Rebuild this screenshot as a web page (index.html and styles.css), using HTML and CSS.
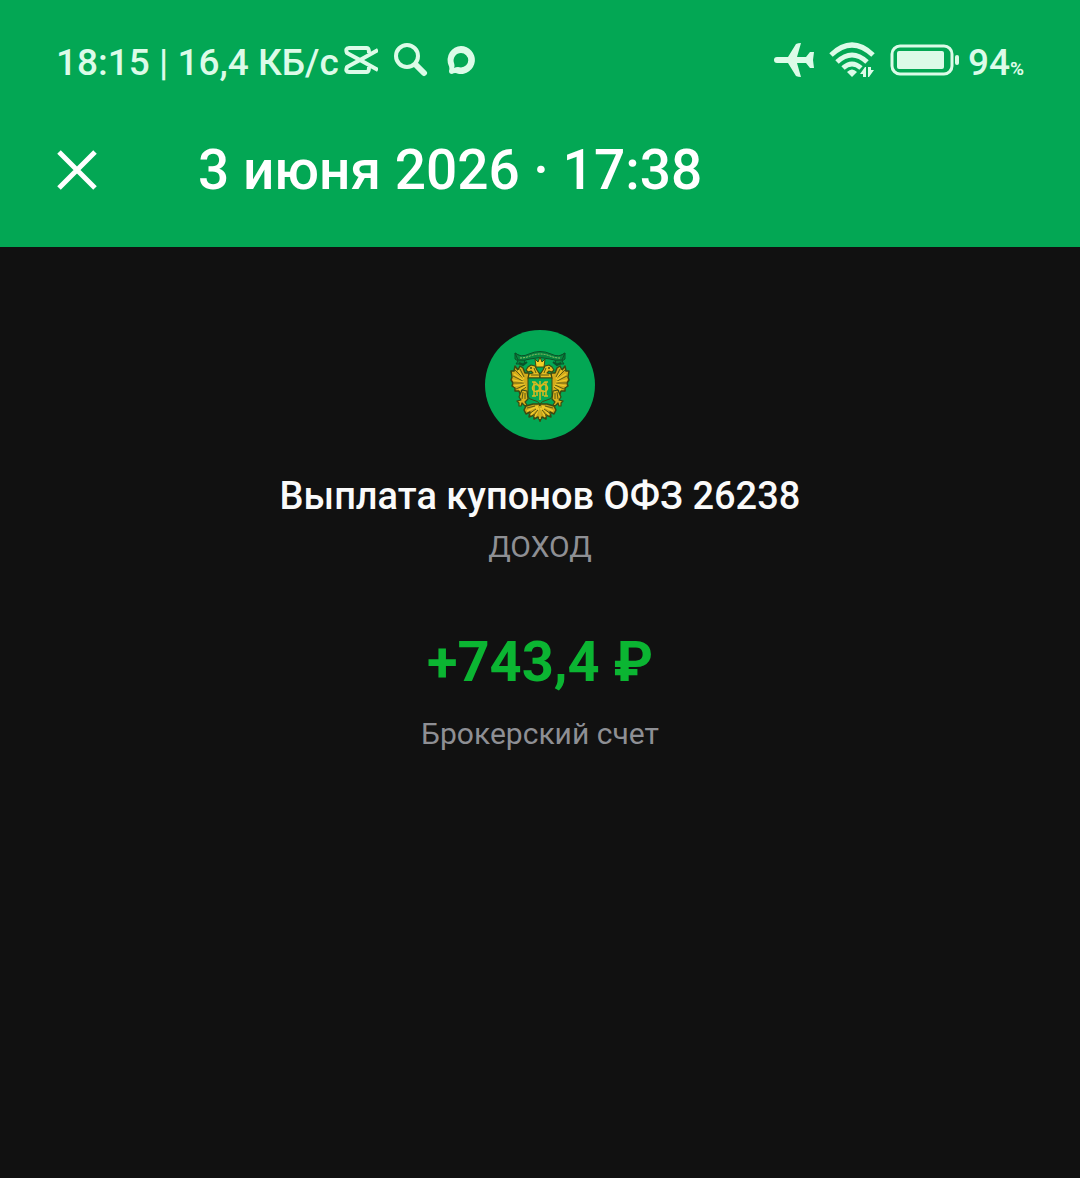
FILE: index.html
```html
<!DOCTYPE html>
<html lang="ru">
<head>
    <meta charset="UTF-8">
    <meta name="viewport" content="width=device-width, initial-scale=1.0">
    <title>Выплата купонов</title>
    <link rel="stylesheet" href="styles.css">
</head>
<body>
    <header class="header">
        <div class="status-bar">
            <div class="status-left">
                <span>18:15 | 16,4 КБ/с</span>
                <svg class="icon-cut" width="34" height="28" viewBox="0 0 34 28" fill="none" stroke="currentColor" stroke-width="4" stroke-linejoin="round">
                    <path d="M34 4L16 14L3 21Q1 26 5 26H23Q25 26 25 21"/>
                    <path d="M34 24L16 14L3 7Q1 2 5 2H23Q25 2 25 7"/>
                </svg>
                <svg class="icon-search" width="34" height="34" viewBox="0 0 34 34" fill="none" stroke="currentColor" stroke-linecap="round">
                    <circle cx="13" cy="13" r="11" stroke-width="4"/>
                    <path d="M22 22L30 30" stroke-width="6"/>
                </svg>
                <svg class="icon-chat" width="28" height="28" viewBox="0 0 28 28">
                    <path fill="currentColor" fill-rule="evenodd" d="M14 0A14 14 0 1 1 11 27.700Q8 26 5 28Q2 28 2 25Q3 22 1.500 19A14 14 0 0 1 14 0ZM14 7A7.500 7.500 0 0 0 7 17Q8 20 7 22Q10 20.500 14 21.500A7.200 7.200 0 0 0 14 7Z"/>
                </svg>
            </div>
            <div class="status-right">
                <svg class="icon-plane" width="42" height="36" viewBox="0 0 42 36" fill="currentColor">
                    <path d="M4 15H15L23 2Q25 1 28 1L24 15H33L37 10H41L40 18L41 26H37L33 21H24L28 35Q25 35 23 34L15 21H4Q1 21 1 18Q1 15 4 15Z"/>
                </svg>
                <svg class="icon-wifi" width="46" height="36" viewBox="0 0 46 36">
                    <g fill="none" stroke="currentColor" stroke-width="5">
                        <path d="M2 13Q23 -7 44 13"/>
                        <path d="M8 20Q23 6 38 20"/>
                        <path d="M14 26Q23 18 32 26"/>
                    </g>
                    <path fill="currentColor" d="M18 30Q23 25 28 30L23 35Z"/>
                    <path fill="#03a754" d="M30 29L36 22H46V36H30Z"/>
                    <path fill="currentColor" d="M37 25V35H34V32H31L36 25ZM39 35V25H42V28H45L40 35Z"/>
                </svg>
                <svg class="icon-battery" width="70" height="32" viewBox="0 0 70 32">
                    <rect x="2" y="2" width="60" height="28" rx="8" fill="none" stroke="currentColor" stroke-width="3"/>
                    <rect x="7" y="7" width="47" height="18" rx="2" fill="currentColor"/>
                    <rect x="65" y="11" width="4" height="10" rx="2" fill="currentColor"/>
                </svg>
                <span class="battery-level">94<span class="percent">%</span></span>
            </div>
        </div>
        <div class="title-bar">
            <button class="close-btn" type="button" aria-label="Закрыть">
                <svg width="42" height="42" viewBox="0 0 42 42" fill="none" stroke="currentColor" stroke-width="5">
                    <path d="M3 3L39 39M39 3L3 39"/>
                </svg>
            </button>
            <h1 class="title">3 июня 2026 · 17:38</h1>
        </div>
    </header>

    <main class="operation">
        <svg class="emblem" width="110" height="110" viewBox="0 0 110 110">
            <defs>
                <!-- left half of the eagle, mirrored for the right one -->
                <g id="half">
                    <!-- wing -->
                    <path d="M44 43L40 43L38 38L35 36L33 40L30 36L29 41L26 41L27 47L26 50L28 53L27 56L30 58L30 61L34 61L35 64L39 62L44 64Z" fill="#d3aa1b" stroke="#3b4a12" stroke-width="1.500" stroke-linejoin="round"/>
                    <path d="M30 40L38 48M28 46L38 51M29 53L39 53M31 59L40 55M36 61L41 57M35 39L39 47" fill="none" stroke="#5b5a12" stroke-width="1"/>
                    <path d="M33 40L39 49M29 44L38 50M28 50L39 52M29 56L40 54M34 60L41 56" fill="none" stroke="#f0cb2c" stroke-width="1.200"/>
                    <!-- leg and claws -->
                    <path d="M37 60L42 61L43 69L40 72L42 75L40 76L37 73L36 76L34 76V73L32 71L36 70L34 67Z" fill="#d9b11d" stroke="#3b4a12" stroke-width="1.200" stroke-linejoin="round"/>
                    <path d="M38 62L37 69M40 63L40 69" fill="none" stroke="#5b5a12" stroke-width="1"/>
                    <!-- tail -->
                    <path d="M55 74L48 74L41 76L39 80L41 84L45 82L44 87L49 85L49 89L53 87L55 91Z" fill="#c9a31c" stroke="#3b4a12" stroke-width="1.500" stroke-linejoin="round"/>
                    <path d="M53 76L42 81M53 77L46 85M54 78L50 87M55 76V89" fill="none" stroke="#f0cb2c" stroke-width="1.500"/>
                    <path d="M50 76L42 78M51 79L44 84M53 80L48 86" fill="none" stroke="#5b5a12" stroke-width="1"/>
                    <!-- head and neck -->
                    <path d="M55 48H43L44 44L48 43L46 41L43 42L41 40L43 37L46 35L50 36L52 40L54 43L55 44Z" fill="#e6bd20" stroke="#3b4a12" stroke-width="1.200" stroke-linejoin="round"/>
                    <circle cx="46" cy="38" r="1" fill="#3b4a12"/>
                    <path d="M49 38L51 43M46 45H54" fill="none" stroke="#5b5a12" stroke-width="1"/>
                    <!-- ribbon end -->
                    <path d="M37 27L30 23V29L33 31L31 34L39 34L40 30Z" fill="#06863d" stroke="#0a5229" stroke-width="1"/>
                    <path d="M34 33L38 35L42 32" stroke="#0a5229" stroke-width="2" fill="none"/>
                </g>
            </defs>
            <circle cx="55" cy="55" r="55" fill="#03a754"/>
            <use href="#half"/>
            <use href="#half" transform="matrix(-1 0 0 1 110 0)"/>
            <path d="M30 23Q36 28 44 24Q55 19 66 24Q74 28 80 23L77 30Q70 31 65 29Q55 26 45 29Q40 31 33 30Z" fill="#06863d" stroke="#0a5229" stroke-width="1"/>
            <path d="M35 28Q40 28 45 26Q55 22 65 26Q70 28 75 28" fill="none" stroke="#9fc56a" stroke-width="1" stroke-dasharray="2 1"/>
            <path d="M51 37L50 29L53 32L55 27L57 32L60 29L59 37Z" fill="#f2cf25" stroke="#3b4a12" stroke-width="1"/>
            <path d="M43 48H67V66Q67 69 62 70Q57 71 55 74Q53 71 48 70Q43 69 43 66Z" fill="#03a754" stroke="#3b4a12" stroke-width="1"/>
            <!-- monogram -->
            <g fill="none" stroke="#d8ba20" stroke-width="1.500">
                <path d="M49 52V66M61 52V66M55 51V70M47 66H51M59 66H63M47 52H50L55 57L60 52H63"/>
                <circle cx="51" cy="58" r="3.500"/>
                <circle cx="59" cy="58" r="3.500"/>
                <path d="M52 66V61H58V66"/>
            </g>
        </svg>
        <h2 class="operation-name">Выплата купонов ОФЗ 26238</h2>
        <p class="operation-type">ДОХОД</p>
        <p class="amount">+743,4 ₽</p>
        <p class="account">Брокерский счет</p>
    </main>
</body>
</html>
```
FILE: styles.css
```css
* {
    box-sizing: border-box;
}
body {
    margin: 0;
    background: #111111;
    color: #fafafa;
    font-family: Roboto, "Noto Sans", sans-serif;
}
h1, h2, p {
    margin: 0;
}
svg {
    display: block;
    flex-shrink: 0;
}
.header {
    background: #03a754;
    padding: 40px 56px 45px;
}
.status-bar {
    display: flex;
    justify-content: space-between;
    height: 46px;
    color: #dcfbe8;
    font-size: 37px;
    font-weight: 500;
    line-height: 46px;
}
.status-left, .status-right {
    display: flex;
    align-items: center;
    white-space: nowrap;
}
.status-bar svg {
    margin-bottom: 6px;
}
.icon-cut {
    margin-left: 5px;
}
.icon-search {
    margin-left: 16px;
}
.icon-chat {
    margin-left: 19px;
}
.icon-wifi {
    margin-left: 14px;
}
.icon-battery {
    margin-left: 15px;
}
.battery-level {
    margin-left: 8px;
}
.percent {
    font-size: 19px;
    font-weight: 700;
    line-height: 1;
}
.title-bar {
    display: flex;
    align-items: center;
    gap: 100px;
    margin-top: 52px;
}
.close-btn {
    padding: 0;
    border: 0;
    background: none;
    color: #ffffff;
    cursor: pointer;
}
.title {
    color: #ffffff;
    font-size: 55px;
    font-weight: 500;
    line-height: 64px;
}
.operation {
    display: flex;
    flex-direction: column;
    align-items: center;
    padding: 83px 24px;
    text-align: center;
}
.operation-name {
    margin-top: 32px;
    font-size: 38px;
    font-weight: 500;
    line-height: 48px;
}
.operation-type {
    margin-top: 9px;
    color: #8e8f94;
    font-size: 30px;
    line-height: 36px;
}
.amount {
    margin-top: 65px;
    color: #0bb532;
    font-size: 56px;
    font-weight: 700;
    line-height: 64px;
}
.account {
    margin-top: 22px;
    color: #8e8f94;
    font-size: 30px;
    line-height: 36px;
}
```
